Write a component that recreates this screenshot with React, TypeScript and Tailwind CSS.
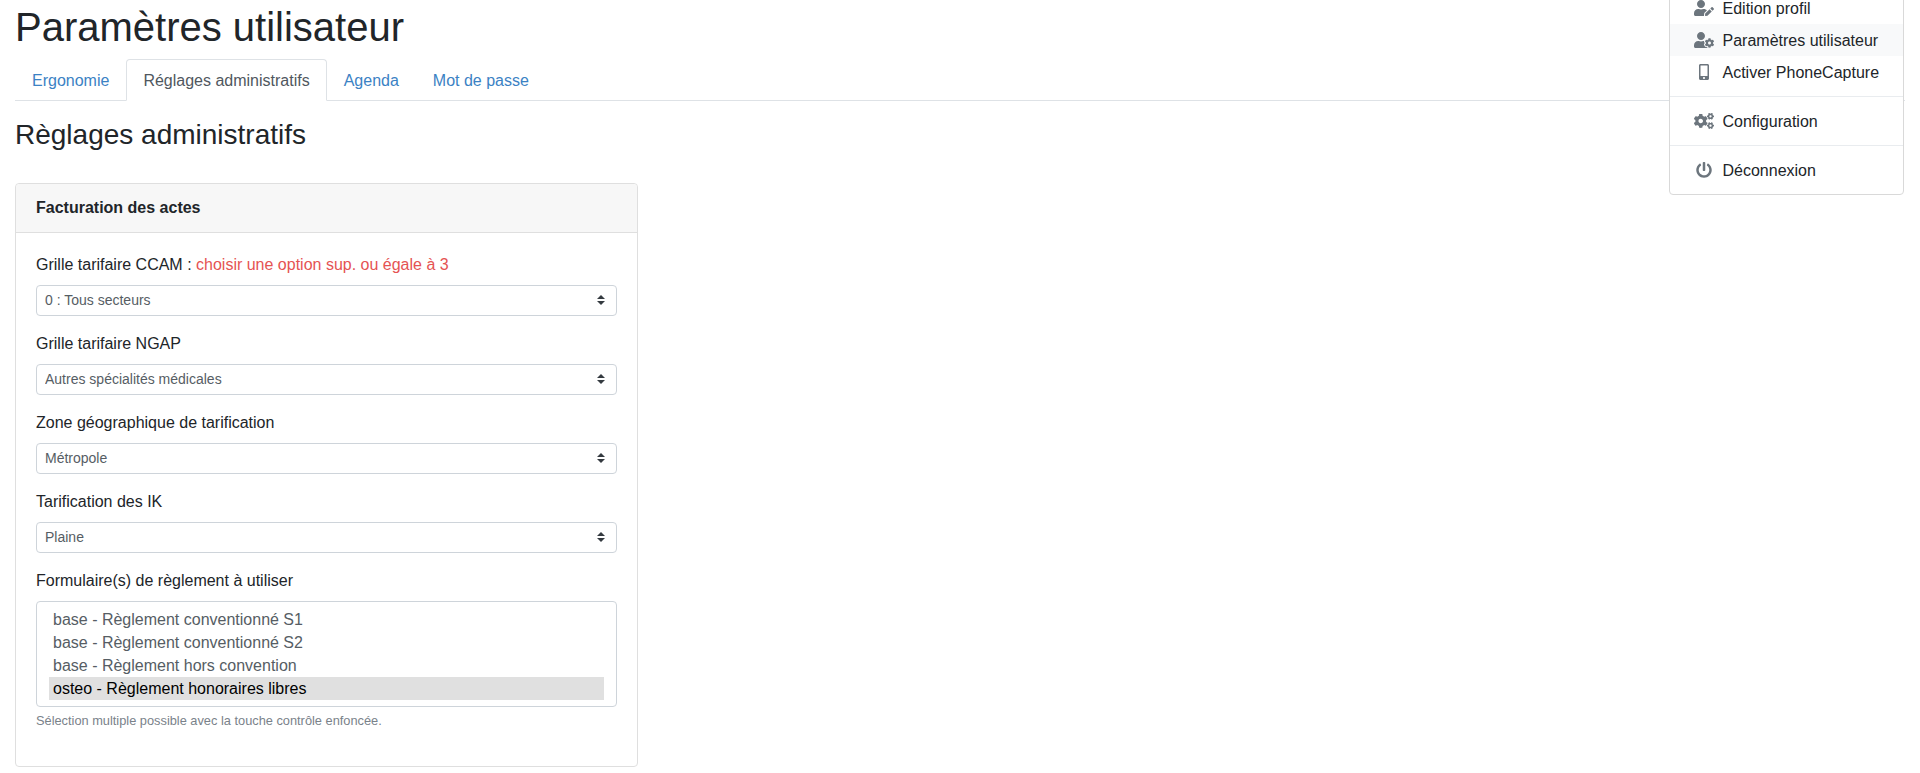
import React from 'react';
import { FaUserEdit, FaUserCog, FaMobileAlt, FaCogs, FaPowerOff } from 'react-icons/fa';

const tabs = ['Ergonomie', 'Réglages administratifs', 'Agenda', 'Mot de passe'];

const formulaires = [
  'base - Règlement conventionné S1',
  'base - Règlement conventionné S2',
  'base - Règlement hors convention',
  'osteo - Règlement honoraires libres',
];

const SelectField: React.FC<{ label: React.ReactNode; value: string }> = ({ label, value }) => (
  <div className="mb-4">
    <label className="mb-2 block text-base leading-6 text-[#212529]">{label}</label>
    <div className="relative">
      <select
        defaultValue={value}
        className="block h-[31px] w-full appearance-none rounded border border-[#ced4da] bg-white pl-2 pr-6 text-sm text-[#565d64]"
      >
        <option>{value}</option>
      </select>
      <svg
        viewBox="0 0 4 5"
        className="pointer-events-none absolute right-[12px] top-[10px] h-[10px] w-2 fill-[#343a40]"
      >
        <path d="M2 0L0 2h4zm0 5L0 3h4z" />
      </svg>
    </div>
  </div>
);

const MenuItem: React.FC<{ icon: React.ReactNode; label: string; active?: boolean }> = ({
  icon,
  label,
  active,
}) => (
  <div className={`flex h-8 items-center pl-6 text-base text-[#212529] ${active ? 'bg-[#f8f9fa]' : ''}`}>
    <span className="mr-[8.5px] flex w-5 justify-center text-[#6c757d]">{icon}</span>
    <span className="pt-[1px]">{label}</span>
  </div>
);

const Divider = () => <div className="my-2 h-px bg-[#e9ecef]" />;

export default function App() {
  return (
    <div className="relative bg-white px-[15px] pt-[3px] font-['Liberation_Sans',Arial,sans-serif] text-[#212529]">
      <h1 className="mb-2 text-[40px] font-normal leading-[48px]">Paramètres utilisateur</h1>

      {/* Tabs */}
      <div className="flex h-[42px] border-b border-[#dee2e6]">
        {tabs.map((tab, index) =>
          index === 1 ? (
            <div
              key={tab}
              className="h-[42px] rounded-t border border-[#dee2e6] border-b-white bg-white px-4 pb-[7px] pt-[9px] text-base leading-6 text-[#50575e]"
            >
              {tab}
            </div>
          ) : (
            <a
              key={tab}
              href="#"
              className="h-[42px] border border-transparent px-4 pb-[7px] pt-[9px] text-base leading-6 text-[#3b82c4]"
            >
              {tab}
            </a>
          ),
        )}
      </div>

      <h3 className="mb-[31px] mt-[17px] text-[28px] font-normal leading-[33.6px]">Règlages administratifs</h3>

      {/* Card */}
      <div className="w-[623px] rounded border border-[#dfdfdf] bg-white">
        <div className="h-[49px] rounded-t border-b border-[#dfdfdf] bg-[#f7f7f7] px-5 py-3 text-base font-bold leading-6">
          Facturation des actes
        </div>
        <div className="p-5">
          <SelectField
            label={
              <>
                Grille tarifaire CCAM : <span className="text-[#e55353]">choisir une option sup. ou égale à 3</span>
              </>
            }
            value="0 : Tous secteurs"
          />
          <SelectField label="Grille tarifaire NGAP" value="Autres spécialités médicales" />
          <SelectField label="Zone géographique de tarification" value="Métropole" />
          <SelectField label="Tarification des IK" value="Plaine" />

          <div className="mb-4">
            <label className="mb-2 block text-base leading-6">Formulaire(s) de règlement à utiliser</label>
            <div role="listbox" className="h-[106px] rounded border border-[#ced4da] bg-white px-3 py-[6px]">
              {formulaires.map((item, index) => (
                <div
                  key={item}
                  className={`h-[23px] px-1 text-base leading-[23px] ${
                    index === 3 ? 'bg-[#e0e0e0] text-black' : 'text-[#565d64]'
                  }`}
                >
                  {item}
                </div>
              ))}
            </div>
            <small className="mt-1 block text-[12.8px] leading-[19.2px] text-[#7a828a]">
              Sélection multiple possible avec la touche contrôle enfoncée.
            </small>
          </div>
        </div>
      </div>

      {/* Open user menu */}
      <div className="absolute right-[16px] top-[-17px] w-[235px] rounded border border-[#d9d9d9] bg-white py-2">
        <MenuItem icon={<FaUserEdit size={16} className="w-5" />} label="Edition profil" />
        <MenuItem icon={<FaUserCog size={16} className="w-5" />} label="Paramètres utilisateur" active />
        <MenuItem icon={<FaMobileAlt size={16} />} label="Activer PhoneCapture" />
        <Divider />
        <MenuItem icon={<FaCogs size={16} className="w-5" />} label="Configuration" />
        <Divider />
        <MenuItem icon={<FaPowerOff size={16} />} label="Déconnexion" />
      </div>
    </div>
  );
}
